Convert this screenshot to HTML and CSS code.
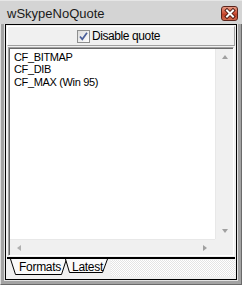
FILE: index.html
```html
<!DOCTYPE html>
<html lang="en">
<head>
<meta charset="UTF-8">
<title>wSkypeNoQuote</title>
<link rel="stylesheet" href="styles.css">
</head>
<body>

<div class="window">
    <div class="titlebar">
        <span class="title">wSkypeNoQuote</span>
        <span class="close">
            <svg width="16" height="15" viewBox="0 0 16 15">
                <path d="M5 4.5 L11 10.5 M11 4.5 L5 10.5" stroke="#4a140c" stroke-width="3.8" stroke-linecap="square"/>
                <path d="M5 4.5 L11 10.5 M11 4.5 L5 10.5" stroke="#fff" stroke-width="2" stroke-linecap="square"/>
            </svg>
        </span>
    </div>
    <div class="frame">
        <div class="client">
            <div class="toolbar">
                <label class="check">
                    <span class="box">
                        <svg width="11" height="11" viewBox="0 0 11 11">
                            <path d="M2 5.5 L4.3 8.3 L9 1.8" fill="none" stroke="#4a5f9a" stroke-width="1.7"/>
                        </svg>
                    </span>
                    Disable quote
                </label>
            </div>

            <div class="list">
                <div class="list-main">
                    <div class="items">
                        <div>CF_BITMAP</div>
                        <div>CF_DIB</div>
                        <div>CF_MAX (Win 95)</div>
                    </div>
                    <div class="vscroll">
                        <span class="arrow up"></span>
                        <span class="arrow down"></span>
                    </div>
                </div>
                <div class="list-bottom">
                    <div class="hscroll">
                        <span class="arrow left"></span>
                        <span class="arrow right"></span>
                    </div>
                    <div class="corner"></div>
                </div>
            </div>

            <div class="tabs">
                <div class="tab latest">
                    <svg class="tab-shape" width="44" height="15" viewBox="0 0 44 15">
                        <path d="M0.5 0 L4.5 13.5 L37.5 13.5 L42.5 0" fill="#fafafa" stroke="#000"/>
                    </svg>
                    <span class="tab-text">Latest</span>
                </div>
                <div class="tab active">
                    <svg class="tab-shape" width="58" height="17" viewBox="0 0 58 17">
                        <path d="M0.5 0 L5.5 15.5 L51.5 15.5 L56.5 0" fill="#fafafa" stroke="#000"/>
                    </svg>
                    <span class="tab-text">Formats</span>
                </div>
                <div class="hatch"></div>
            </div>
        </div>
    </div>
</div>

</body>
</html>
```

FILE: styles.css
```css
body {
    margin: 0;
    padding: 0;
    font-family: "Liberation Sans", Arial, sans-serif;
}

.window {
    width: 242px;
    height: 285px;
    box-sizing: border-box;
    display: flex;
    flex-direction: column;
    background-color: #a3a3a3;
    border: 1px solid;
    border-color: #dedede #6a6a6a #6a6a6a #dedede;
}

.titlebar {
    height: 23px;
    display: flex;
    align-items: center;
    justify-content: space-between;
    padding: 0 4px 0 7px;
    background-color: #d4d4d4;
    margin: -1px -1px 0 -1px;
    border-top: 1px solid #e6e6e6;
}

.title {
    font-size: 13px;
    color: #1a1a1a;
    padding-top: 1px;
}

.close {
    width: 17px;
    height: 15px;
    box-sizing: border-box;
    border: 1px solid #5b231a;
    border-radius: 3px;
    background: linear-gradient(#e89c86, #cc4f36 50%, #bb3a22 51%, #d06a4e);
    display: flex;
    align-items: center;
    justify-content: center;
    margin-top: 2px;
}

.close svg {
    margin: -1px;
}

.frame {
    flex: 1;
    display: flex;
    padding: 0 3px 3px 3px;
}

.client {
    flex: 1;
    display: flex;
    flex-direction: column;
    border: 1px solid #e2e2e2;
    border-top: none;
    box-shadow: inset 1px 1px 0 #000, inset -1px -1px 0 #000;
    background-color: #f0f0f0;
    padding: 2px;
}

.toolbar {
    height: 20px;
    box-sizing: border-box;
    display: flex;
    justify-content: center;
    align-items: center;
    border: 1px solid;
    border-color: #ffffff #a0a0a0 #a0a0a0 #ffffff;
}

.check {
    display: flex;
    align-items: center;
    font-size: 12px;
    letter-spacing: -0.4px;
    color: #000;
    margin-right: 5px;
}

.box {
    width: 13px;
    height: 13px;
    box-sizing: border-box;
    border: 1px solid #8e8f8f;
    background: linear-gradient(135deg, #dcdcdc, #ffffff);
    display: flex;
    align-items: center;
    justify-content: center;
    margin-right: 2px;
}

.list {
    flex: 1;
    display: flex;
    flex-direction: column;
    border: 1px solid;
    border-color: #a0a0a0 #ffffff #ffffff #a0a0a0;
    box-shadow: inset 1px 1px 0 #696969;
    background-color: #fff;
    margin: 1px 1px 1px 1px;
    padding: 1px 0 0 1px;
}

.list-main {
    flex: 1;
    display: flex;
}

.items {
    flex: 1;
    padding: 2px 0 0 4px;
    font-size: 11px;
    letter-spacing: -0.35px;
    line-height: 12.4px;
    color: #000;
}

.vscroll {
    width: 17px;
    display: flex;
    flex-direction: column;
    justify-content: space-between;
    align-items: center;
    background-color: #f0f0f0;
    border-left: 1px solid #e8e8e8;
    padding: 6px 0;
}

.list-bottom {
    height: 16px;
    display: flex;
}

.hscroll {
    flex: 1;
    display: flex;
    justify-content: space-between;
    align-items: center;
    background-color: #f0f0f0;
    border-top: 1px solid #e8e8e8;
    padding: 0 8px 0 7px;
}

.corner {
    width: 18px;
    background-color: #f0f0f0;
}

.arrow {
    width: 0;
    height: 0;
    border: 3px solid transparent;
}

.arrow.up {
    border-bottom: 4px solid #a0a0a0;
    border-top-width: 0;
}

.arrow.down {
    border-top: 4px solid #a0a0a0;
    border-bottom-width: 0;
}

.arrow.left {
    border-right: 4px solid #b0b0b0;
    border-left-width: 0;
}

.arrow.right {
    border-left: 4px solid #a0a0a0;
    border-right-width: 0;
}

.tabs {
    height: 19px;
    display: flex;
    border-top: 2px solid #000;
    padding-left: 3px;
    background-color: #f0f0f0;
}

.tab {
    position: relative;
    display: flex;
    justify-content: center;
    font-size: 12px;
    letter-spacing: -0.3px;
    color: #000;
}

.tab-shape {
    position: absolute;
    left: 0;
    top: 0;
}

.tab-text {
    position: relative;
    padding-top: 1px;
}

.tab.active {
    order: 1;
    width: 58px;
    padding-left: 2px;
    box-sizing: border-box;
}

.tab.latest {
    order: 2;
    width: 44px;
    margin-left: -3px;
    padding-left: 1px;
    box-sizing: border-box;
}

.hatch {
    order: 3;
    flex: 1;
    margin: 1px 0 2px 2px;
    background-color: #fff;
    background-image: repeating-conic-gradient(#e4e4e4 0 25%, #ffffff 0 50%);
    background-size: 2px 2px;
}
```
